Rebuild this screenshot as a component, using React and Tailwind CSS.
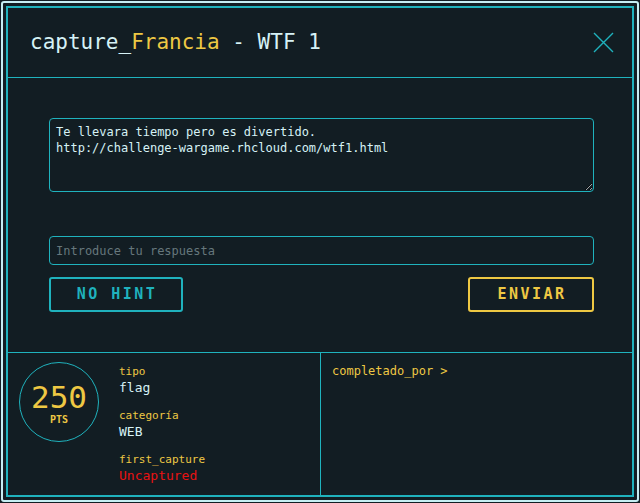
import React from "react";

const mono = { fontFamily: '"DejaVu Sans Mono", "Liberation Mono", monospace' };

export default function App() {
  return (
    <div className="w-[640px] h-[503px] bg-[#121d23] p-[1px]" style={mono}>
      <div className="h-full border-2 border-[#c6eef3] rounded-[3px] p-[3px]">
        <div className="h-full border-2 border-[#1fb2bd] flex flex-col">
          {/* Header */}
          <div className="h-[70px] flex items-center justify-between pl-[22px] pr-[18px] border-b border-[#1fb2bd] shrink-0">
            <h1 className="text-[21px] text-[#d6f2f6] leading-none">
              capture_<span className="text-[#eec843]">Francia</span> - WTF 1
            </h1>
            <svg width="21" height="21" viewBox="0 0 21 21" className="text-[#1fb2bd]">
              <path d="M1 1 L20 20 M20 1 L1 20" stroke="currentColor" strokeWidth="1.4" fill="none" />
            </svg>
          </div>

          {/* Body */}
          <div className="flex flex-col pl-[41px] pr-[38px] pt-[40px] pb-[40px] border-b border-[#1fb2bd] shrink-0">
            <textarea
              readOnly
              className="h-[74px] w-full bg-transparent border border-[#1fb2bd] rounded-[4px] px-[6px] py-[5px] text-[12px] leading-[16px] text-[#d6f2f6] resize-y outline-none"
              style={mono}
              defaultValue={"Te llevara tiempo pero es divertido.\nhttp://challenge-wargame.rhcloud.com/wtf1.html"}
            />
            <input
              className="mt-[44px] h-[29px] w-full bg-transparent border border-[#1fb2bd] rounded-[4px] px-[6px] text-[12px] text-[#d6f2f6] placeholder:text-[#66777c] outline-none"
              style={mono}
              placeholder="Introduce tu respuesta"
            />
            <div className="mt-[12px] flex justify-between">
              <button className="w-[134px] h-[35px] border-2 border-[#1fb2bd] rounded-[3px] text-[#1fb2bd] text-[15px] font-bold tracking-[2.5px] pl-[2px]" style={mono}>
                NO HINT
              </button>
              <button className="w-[126px] h-[35px] border-2 border-[#eec843] rounded-[3px] text-[#eec843] text-[15px] font-bold tracking-[2.5px] pl-[2px]" style={mono}>
                ENVIAR
              </button>
            </div>
          </div>

          {/* Bottom */}
          <div className="flex flex-1 min-h-0">
            <div className="w-[313px] border-r border-[#1fb2bd] flex pl-[11px] pt-[9px]">
              <div className="w-[80px] h-[80px] rounded-full border border-[#1fb2bd] flex flex-col items-center justify-center shrink-0">
                <div className="text-[31px] leading-[30px] text-[#eec843] mt-[4px]">250</div>
                <div className="text-[10px] font-bold leading-[12px] text-[#eec843] mt-[2px]">PTS</div>
              </div>
              <div className="ml-[20px] flex flex-col pt-[3px]">
                <div className="text-[11px] leading-[14px] text-[#eec843]">tipo</div>
                <div className="text-[13px] leading-[18px] text-[#d6f2f6]">flag</div>
                <div className="text-[11px] leading-[14px] text-[#eec843] mt-[12px]">categoría</div>
                <div className="text-[13px] leading-[18px] text-[#d6f2f6]">WEB</div>
                <div className="text-[11px] leading-[14px] text-[#eec843] mt-[12px]">first_capture</div>
                <div className="text-[13px] leading-[18px] text-[#e81212]">Uncaptured</div>
              </div>
            </div>
            <div className="flex-1 pl-[11px] pt-[10px]">
              <div className="text-[12px] leading-[16px] text-[#eec843]">completado_por &gt;</div>
            </div>
          </div>
        </div>
      </div>
    </div>
  );
}
